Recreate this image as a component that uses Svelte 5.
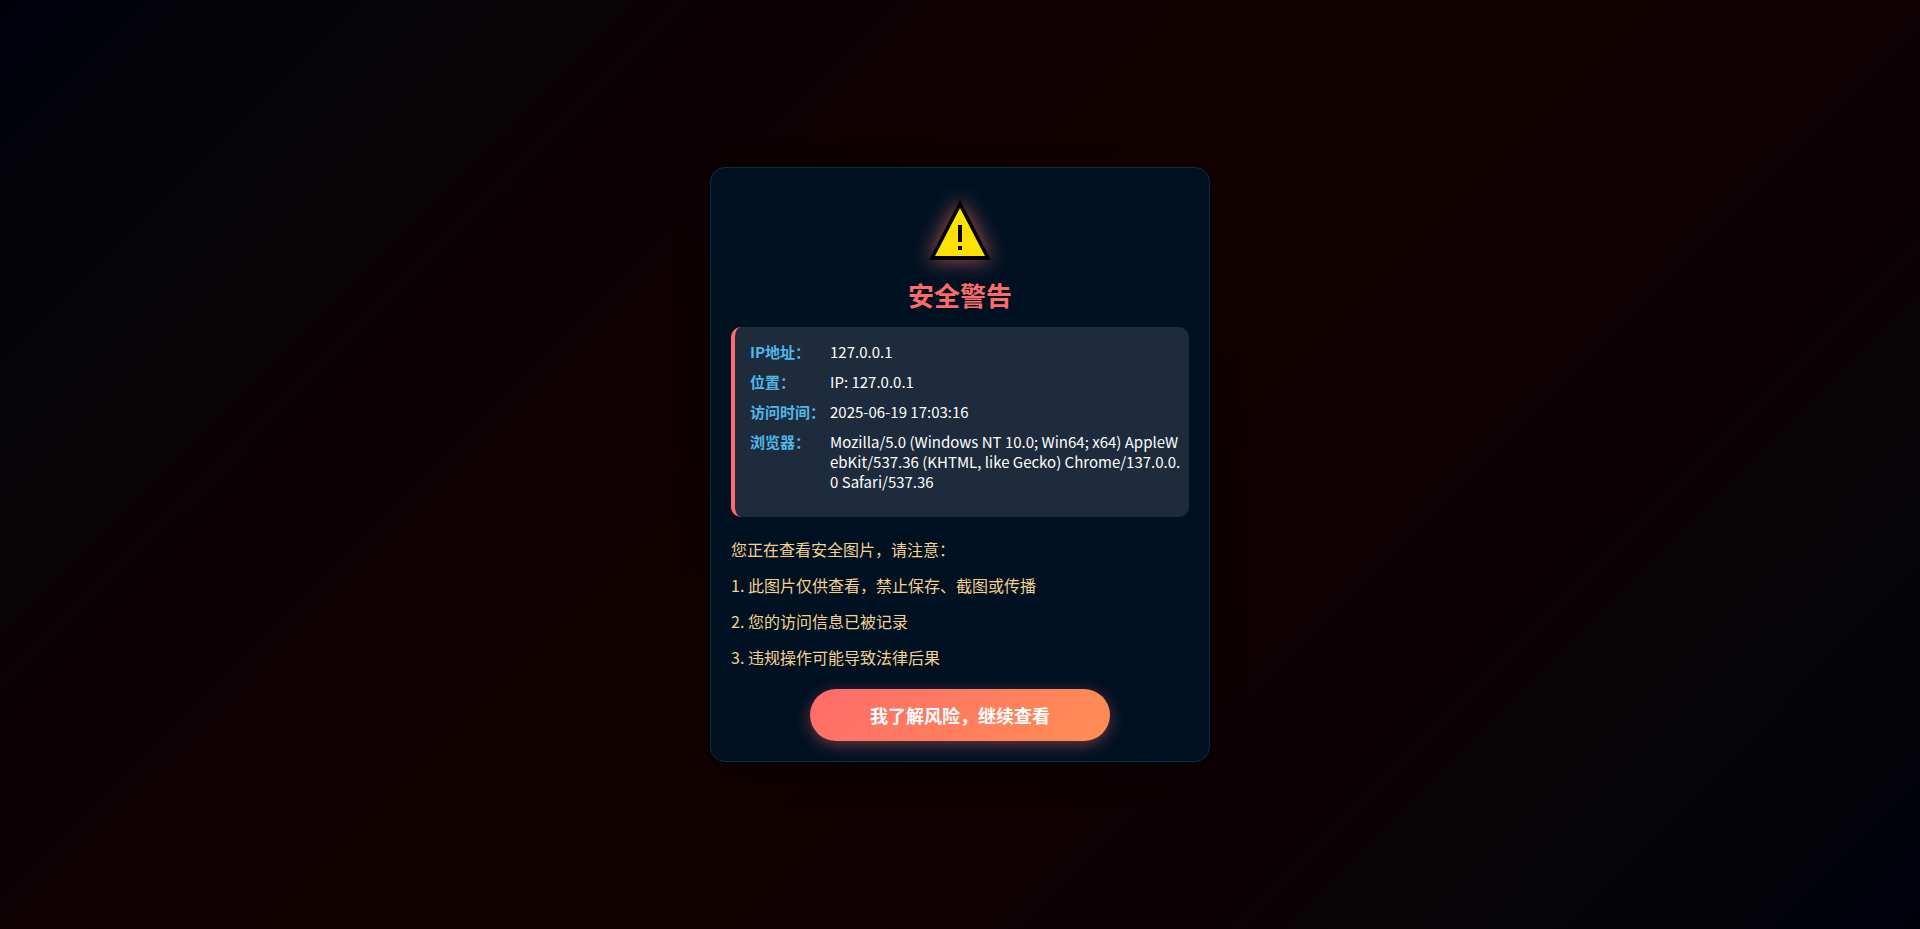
<script>
	let accepted = false;

	const visitor = [
		{ label: 'IP地址：', value: '127.0.0.1' },
		{ label: '位置：', value: 'IP: 127.0.0.1' },
		{ label: '访问时间：', value: '2025-06-19 17:03:16' },
		{
			label: '浏览器：',
			value: 'Mozilla/5.0 (Windows NT 10.0; Win64; x64) AppleWebKit/537.36 (KHTML, like Gecko) Chrome/137.0.0.0 Safari/537.36'
		}
	];

	const notices = [
		'您正在查看安全图片，请注意：',
		'1. 此图片仅供查看，禁止保存、截图或传播',
		'2. 您的访问信息已被记录',
		'3. 违规操作可能导致法律后果'
	];

	const accept = () => (accepted = true);
</script>

<main class="page">
	{#if !accepted}
		<section class="card">
			<svg class="icon" viewBox="0 0 62 60" aria-hidden="true">
				<path d="M31 0 L62 60 H0 Z" fill="#000" />
				<path d="M31 8 L56 56 H6 Z" fill="#ffe100" />
				<path d="M29 25h4v17h-4z M29 46h4v4h-4z" fill="#000" />
			</svg>
			<h1>安全警告</h1>

			<dl class="info">
				{#each visitor as item}
					<div class="row">
						<dt>{item.label}</dt>
						<dd>{item.value}</dd>
					</div>
				{/each}
			</dl>

			<div class="notices">
				{#each notices as notice}
					<p>{notice}</p>
				{/each}
			</div>

			<button type="button" on:click={accept}>我了解风险，继续查看</button>
		</section>
	{/if}
</main>

<style>
	:global(body) {
		margin: 0;
		background: #000;
	}

	.page {
		min-height: 100vh;
		box-sizing: border-box;
		padding: 20px;
		display: flex;
		align-items: center;
		justify-content: center;
		font-family: 'Noto Sans CJK SC', sans-serif;
		color: #fff;
		background: linear-gradient(135deg, #00000d 0%, #040406 10%, #070406 20%, #0d0005 28%, #110200 46%, #110200 54%, #0d0005 72%, #070406 80%, #040406 90%, #00000d 100%);
	}

	.card {
		box-sizing: border-box;
		width: 100%;
		max-width: 500px;
		padding: 20px;
		display: flex;
		flex-direction: column;
		align-items: center;
		border: 1px solid #172a3a;
		border-radius: 15px;
		background: #001122;
		box-shadow: 0 10px 30px rgba(0, 0, 0, 0.5);
	}

	.icon {
		width: 62px;
		height: 60px;
		margin: 12px 0 18px;
		filter: drop-shadow(0 0 10px rgba(255, 107, 107, 0.7));
	}

	h1 {
		margin: 0 0 15px;
		font-size: 26px;
		line-height: 34px;
		color: #ff6b6b;
	}

	.info {
		box-sizing: border-box;
		width: 100%;
		margin: 0 0 20px;
		padding: 15px 7px 15px 15px;
		border-left: 4px solid #ff6b6b;
		border-radius: 10px;
		background: #1e2b3c;
		font-size: 15px;
		line-height: 20px;
	}

	.row {
		display: flex;
		margin-bottom: 10px;
	}

	dt {
		flex: 0 0 80px;
		font-weight: bold;
		white-space: nowrap;
		color: #4fb8ea;
	}

	dd {
		flex: 1;
		margin: 0;
		word-break: break-all;
	}

	.notices {
		width: 100%;
		margin-bottom: 20px;
		display: flex;
		flex-direction: column;
		gap: 12px;
		font-size: 16px;
		line-height: 24px;
		color: #f5d090;
	}

	p {
		margin: 0;
	}

	button {
		width: 100%;
		max-width: 300px;
		padding: 13px 20px;
		border: none;
		border-radius: 50px;
		font-family: inherit;
		font-size: 18px;
		font-weight: bold;
		line-height: 26px;
		color: #fff;
		background: linear-gradient(135deg, #ff6b6b, #ff8e53);
		box-shadow: 0 4px 15px rgba(255, 107, 107, 0.4);
		cursor: pointer;
	}
</style>
